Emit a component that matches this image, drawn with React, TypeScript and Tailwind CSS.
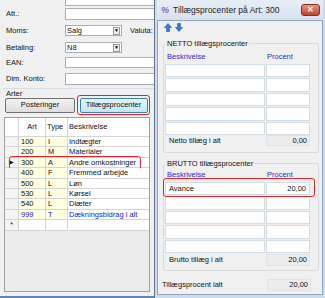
import React from "react";

const rows = [
  { art: "100", type: "I", text: "Indtægter" },
  { art: "200", type: "M", text: "Materialer" },
  { art: "300", type: "A", text: "Andre omkostninger", current: true },
  { art: "400", type: "F", text: "Fremmed arbejde" },
  { art: "500", type: "L", text: "Løn" },
  { art: "530", type: "L", text: "Kørsel" },
  { art: "540", type: "L", text: "Diæter" },
  { art: "999", type: "T", text: "Dækningsbidrag i alt", total: true },
];

const Input = ({ className = "" }: { className?: string }) => (
  <div className={`h-full border border-[#abadb3] bg-white ${className}`} />
);

const Select = ({ value }: { value: string }) => (
  <div className="flex h-full w-[57px] items-center border border-[#abadb3] bg-white pl-[1px]">
    <span className="flex-1 leading-none">{value}</span>
    <div className="mr-[1px] flex h-[8px] w-[7px] items-center justify-center border border-[#9a9a9a] bg-[#ececec] text-[5px] leading-none text-black">
      ▼
    </div>
  </div>
);

const FormRow = ({ label, children, className }: { label: string; children: React.ReactNode; className: string }) => (
  <div className={`flex items-center ${className}`}>
    <span className="w-[65px] shrink-0 pl-[6px] leading-none">{label}</span>
    {children}
  </div>
);

const Arrow = ({ down }: { down?: boolean }) => (
  <svg width="8" height="9" viewBox="0 0 8 9" className={down ? "rotate-180" : ""}>
    <path d="M4 0.5 L7.5 4.5 L5.5 4.5 L5.5 8.5 L2.5 8.5 L2.5 4.5 L0.5 4.5 Z" fill="#3b7be0" stroke="#1d57b5" strokeWidth="0.6" />
  </svg>
);

const Cells = ({ count }: { count: number }) => (
  <div className="flex flex-col gap-[1px]">
    {Array.from({ length: count }).map((_, i) => (
      <div key={i} className="flex h-[13.5px] gap-[1px]">
        <div className="w-[100px] border border-[#d3dde6] bg-white" />
        <div className="w-[44px] border border-[#d3dde6] bg-white" />
      </div>
    ))}
  </div>
);

export default function App() {
  return (
    <div className="flex h-[298px] w-[325px] overflow-hidden bg-[#f0f0f0] font-['Liberation_Sans',Arial,sans-serif] text-[7.5px] text-[#111]">
      {/* main window (behind) */}
      <div className="flex h-full w-[154px] shrink-0 flex-col overflow-hidden border-b-2 border-[#5b86c4]">
        <div className="ml-[65px] h-[6px] w-[100px] shrink-0 border border-t-0 border-[#abadb3] bg-white" />
        <FormRow label="Att.:" className="mt-[2px] h-[12px]">
          <Input className="w-[100px] shrink-0" />
        </FormRow>
        <FormRow label="Moms:" className="mt-[5px] h-[11px]">
          <Select value="Salg" />
          <span className="ml-[8px] leading-none">Valuta:</span>
        </FormRow>
        <FormRow label="Betaling:" className="mt-[6px] h-[11px]">
          <Select value="N8" />
        </FormRow>
        <FormRow label="EAN:" className="mt-[4px] h-[11px]">
          <Input className="w-[100px] shrink-0" />
        </FormRow>
        <FormRow label="Dim. Konto:" className="mt-[5px] h-[12px]">
          <Input className="w-[100px] shrink-0" />
        </FormRow>
        <div className="mt-[3px] ml-[3px] h-[6px] border-t border-[#d5dfe5] pl-[3px] leading-[9px]">Arter</div>
        <div className="flex h-[22px] items-center">
          <div className="ml-[5px] flex h-[15px] w-[70px] items-center justify-center rounded-[2px] border border-[#707070] bg-gradient-to-b from-[#f2f2f2] to-[#dddddd]">
            Posteringer
          </div>
          <div className="ml-[2px] rounded-[3px] border-[1.5px] border-[#e0262b] p-[1.5px]">
            <div className="flex h-[15px] w-[68px] items-center justify-center rounded-[2px] border border-[#3c7fb1] bg-gradient-to-b from-[#e5f4fc] to-[#c4e5f6]">
              Tillægsprocenter
            </div>
          </div>
        </div>
        <div className="mx-[4px] mt-[1px] mb-[4px] flex flex-1 flex-col border border-[#a0a0a0] bg-[#ececec]">
          <div className="flex h-[19px] shrink-0 items-center border-b border-[#d5d5d5] bg-white">
            <div className="h-full w-[14px] border-r border-[#d5d5d5]" />
            <div className="flex h-full w-[27px] items-center justify-center border-r border-[#d5d5d5]">Art</div>
            <div className="flex h-full w-[22px] items-center border-r border-[#d5d5d5] pl-[1px]">Type</div>
            <div className="flex h-full flex-1 items-center pl-[1px]">Beskrivelse</div>
          </div>
          {rows.map((r) => (
            <div key={r.art} className={`relative flex h-[10.4px] shrink-0 ${r.total ? "text-[#2222dd]" : ""}`}>
              <div className="flex h-full w-[14px] items-center justify-center border-r border-b border-[#d5d5d5] bg-[#f4f4f4] text-[6px] text-black">
                {r.current ? "▶" : ""}
              </div>
              <div className="flex h-full w-[27px] items-center border-r border-b border-[#d5d5d5] bg-[#ffffe1] pl-[2px]">{r.art}</div>
              <div className="flex h-full w-[22px] items-center border-r border-b border-[#d5d5d5] bg-[#ffffe1] pl-[2px]">{r.type}</div>
              <div className="flex h-full flex-1 items-center border-b border-[#d5d5d5] bg-white pl-[1px]">{r.text}</div>
              {r.current && (
                <div className="absolute top-[-1.5px] bottom-[-1.5px] left-[4px] w-[132px] rounded-[3px] border-[1.5px] border-[#e0262b]" />
              )}
            </div>
          ))}
          <div className="flex h-[10.4px] shrink-0">
            <div className="flex h-full w-[14px] items-center justify-center border-r border-b border-[#d5d5d5] bg-[#f4f4f4] text-[7px] leading-none">*</div>
            <div className="h-full w-[27px] border-r border-b border-[#d5d5d5] bg-white" />
            <div className="h-full w-[22px] border-r border-b border-[#d5d5d5] bg-white" />
            <div className="h-full flex-1 border-b border-[#d5d5d5] bg-white" />
          </div>
        </div>
      </div>

      {/* dialog */}
      <div className="flex h-full flex-1 flex-col border-l border-[#60728a] bg-[#cddbeb] px-[2px] pb-[3px]">
        <div className="flex h-[20px] shrink-0 items-center bg-gradient-to-b from-[#e8eef6] to-[#d6e1ee]">
          <span className="ml-[4px] w-[12px] text-[9px] font-bold italic leading-none text-[#7a6c9c]">%</span>
          <span className="text-[8.5px] leading-none text-[#1e1e1e]">Tillægsprocenter på Art: 300</span>
          <div className="ml-auto mr-[3px] flex h-[12px] w-[19px] items-center justify-center rounded-[3px] border border-[#8a2f24] bg-gradient-to-b from-[#e7917f] to-[#c2412c] text-[8px] font-bold leading-none text-white">
            ✕
          </div>
        </div>
        <div className="flex flex-1 flex-col border border-[#8ea4c0] bg-[#f0f0f0]">
          <div className="flex h-[12px] items-center gap-[3px] pl-[6px]">
            <Arrow />
            <Arrow down />
          </div>
          <div className="ml-[5px] mr-[3px] mt-[10px] h-[110px] rounded-[3px] border border-[#d9d9d9] px-[1px]">
            <div className="-mt-[4px] w-fit bg-[#f0f0f0] pl-[2px] pr-[1px] leading-none">NETTO tillægsprocenter</div>
            <div className="mt-[4px] flex h-[10px] items-center text-[#2a2ad0]">
              <span className="w-[102px] pl-[2px]">Beskrivelse</span>
              <span>Procent</span>
            </div>
            <div className="mt-[2px]">
              <Cells count={5} />
            </div>
            <div className="mt-[0px] flex h-[11px] items-center">
              <span className="w-[101px] pl-[4px]">Netto tillæg i alt</span>
              <div className="flex h-full w-[44px] items-center justify-end border border-[#e3e3e3] bg-[#ececec] pr-[2px]">0,00</div>
            </div>
          </div>
          <div className="ml-[5px] mr-[3px] mt-[10px] h-[108px] rounded-[3px] border border-[#d9d9d9] px-[1px]">
            <div className="-mt-[4px] w-fit bg-[#f0f0f0] pl-[2px] pr-[1px] leading-none">BRUTTO tillægsprocenter</div>
            <div className="mt-[2px] flex h-[10px] items-center text-[#2a2ad0]">
              <span className="w-[102px] pl-[2px]">Beskrivelse</span>
              <span>Procent</span>
            </div>
            <div className="relative mt-[2px] flex h-[13.5px] gap-[1px]">
              <div className="flex w-[100px] items-center border border-[#d3dde6] bg-white pl-[3px]">Avance</div>
              <div className="flex w-[44px] items-center justify-end border border-[#d3dde6] bg-white pr-[3px]">20,00</div>
              <div className="absolute -top-[4px] -bottom-[2px] -left-[2px] w-[152px] rounded-[3px] border-[1.5px] border-[#e0262b]" />
            </div>
            <div className="mt-[1px]">
              <Cells count={4} />
            </div>
            <div className="mt-[1px] flex h-[12px] items-center">
              <span className="w-[101px] pl-[4px]">Brutto tillæg i alt</span>
              <div className="flex h-full w-[44px] items-center justify-end border border-[#e3e3e3] bg-[#ececec] pr-[2px]">20,00</div>
            </div>
          </div>
          <div className="ml-[4px] mt-[8px] flex h-[12px] items-center">
            <span className="w-[105px]">Tillægsprocent ialt</span>
            <div className="flex h-full w-[44px] items-center justify-end border border-[#e3e3e3] bg-[#ececec] pr-[2px]">20,00</div>
          </div>
        </div>
      </div>
    </div>
  );
}
